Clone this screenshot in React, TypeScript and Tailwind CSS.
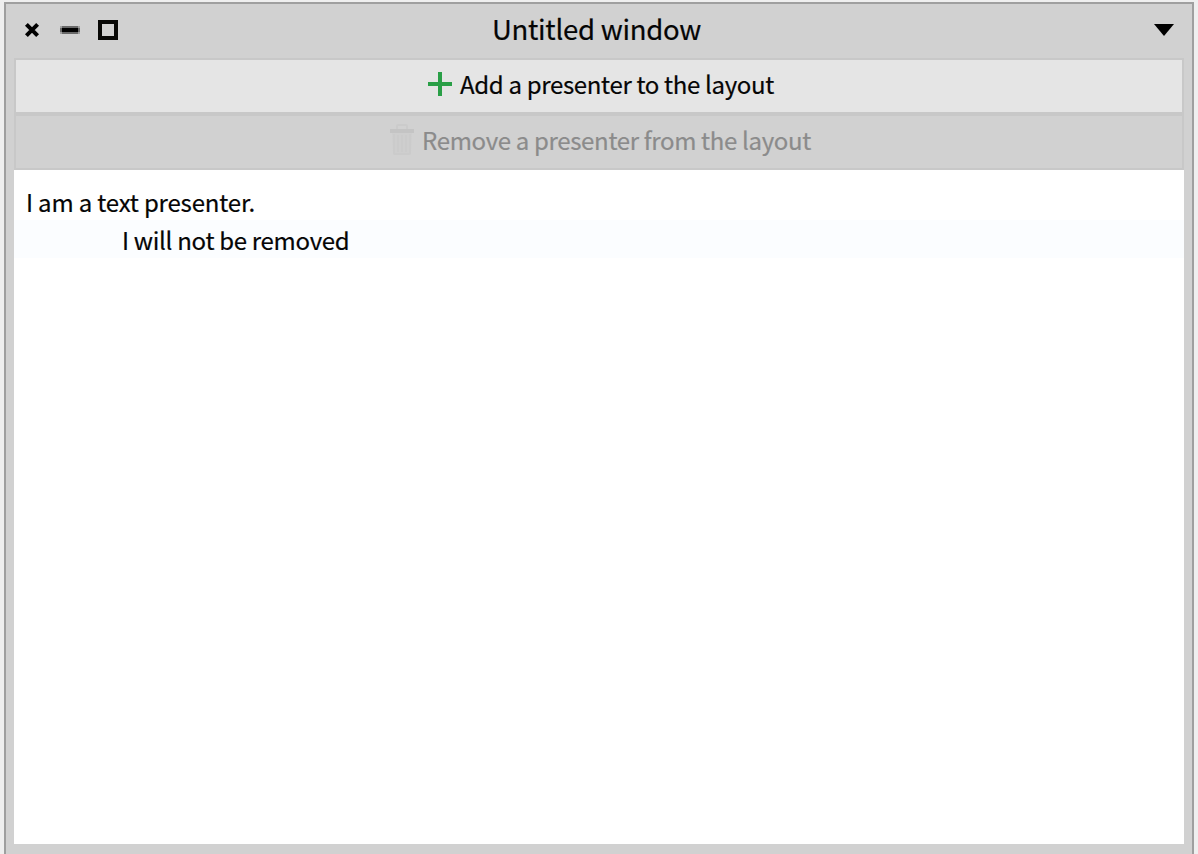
const font = "font-['Noto_Sans_CJK_SC',sans-serif] [-webkit-text-stroke:0.2px]";

function TitleBar() {
  return (
    <header className="grid h-[54px] grid-cols-[1fr_auto_1fr] items-start">
      <div className="flex pt-4 pl-2.5">
        <svg width="20" height="20" viewBox="0 0 20 20" className="mr-4">
          <path d="M2.4 4.4 13.6 15.6M13.6 4.4 2.4 15.6" stroke="#000" strokeWidth="4" />
        </svg>
        <svg width="20" height="20" viewBox="0 0 20 20" className="mr-[18px]">
          <path d="M0 6h20v8H0z" fill="#a0a0a0" />
          <path d="M2 6h16v8H2z" fill="#686868" />
          <path d="M0 8h20v4H0z" fill="#686868" />
          <path d="M2 8h16v4H2z" fill="#000" />
        </svg>
        <svg width="20" height="20" viewBox="0 0 20 20">
          <path d="M2 2h16v16H2z" fill="none" stroke="#080806" strokeWidth="4" />
        </svg>
      </div>
      <h1 className="pr-[5px] text-[27.5px] leading-[48px] tracking-[-0.27px] whitespace-nowrap">Untitled window</h1>
      <div className="flex justify-end pt-5 pr-2.5">
        <svg width="20" height="12" viewBox="0 0 20 12">
          <path d="M0 0h20L10 12z" fill="#000" />
        </svg>
      </div>
    </header>
  );
}

export default function App() {
  return (
    <div className={`h-[854px] w-[1198px] overflow-hidden bg-[#efefef] pt-0.5 pl-1 text-[#050505] ${font}`}>
      <main className="flex h-[860px] w-[1190px] flex-col border-2 border-[#9f9f9f] bg-[#d1d1d1] px-2">
        <TitleBar />
        <button className="flex h-14 shrink-0 items-center justify-center border-2 border-[#c8c8c8] bg-[#e5e5e5] pb-1 pl-1 text-[24px] tracking-[-0.33px]">
          <svg width="24" height="24" viewBox="0 0 24 24" className="mr-2">
            <path d="M10 0h4v10h10v4H14v10h-4V14H0v-4h10z" fill="#2a9f47" />
          </svg>
          <span className="leading-[48px] whitespace-nowrap">Add a presenter to the layout</span>
        </button>
        <button className="flex h-14 shrink-0 items-center justify-center border-2 border-[#c8c8c8] bg-[#d1d1d1] pb-1 pl-[3px] text-[24px] tracking-[-0.33px] text-[#8b8b8b]">
          <svg width="24" height="32" viewBox="0 0 24 32" className="mr-2" fill="none" stroke="#cbcbcb" strokeWidth="2">
            <path d="M7 5V2q0-1 1-1h8q1 0 1 1v3" />
            <path d="M0 7h24" stroke="#c4c4c4" strokeWidth="4" />
            <path d="M2 9h20l-1 20q0 2-2 2H5q-2 0-2-2z" fill="#cecece" stroke="none" />
            <path d="M4 10v19q0 1 1 1h14q1 0 1-1V10M8 11v17M12 11v17M16 11v17" />
          </svg>
          <span className="leading-[48px] whitespace-nowrap">Remove a presenter from the layout</span>
        </button>
        <section className="h-[674px] shrink-0 bg-white pt-3 text-[24px] leading-[38px] whitespace-nowrap">
          <p className="h-[38px] pt-px pl-3 tracking-[-0.17px]">I am a text presenter.</p>
          <p className="h-[38px] bg-[#fbfdff] pt-px pl-[108px] tracking-[-0.29px]">I will not be removed</p>
        </section>
      </main>
    </div>
  );
}
